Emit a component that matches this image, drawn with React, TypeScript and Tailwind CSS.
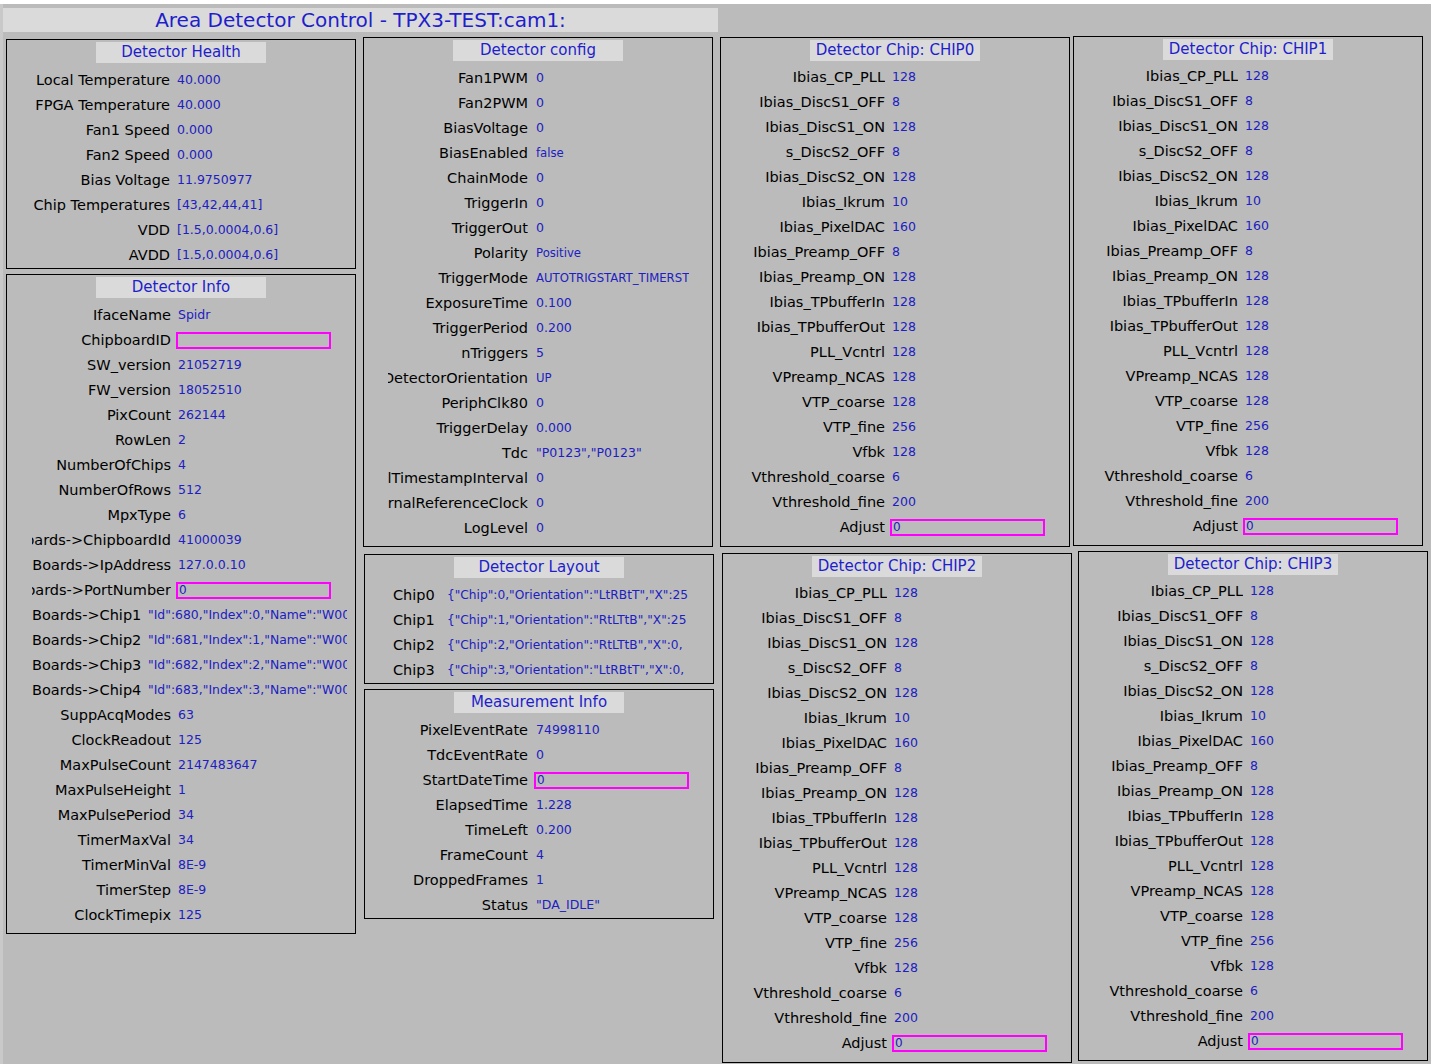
import type { ReactNode } from "react";

type RowDef = {
  label: string;
  value?: string;
  input?: boolean;
  small?: boolean;
};

const VALUE = "text-[#2020c2]";

function Panel({
  title,
  className,
  rowsTop = "mt-[5px]",
  children,
}: {
  title: string;
  className?: string;
  rowsTop?: string;
  children: ReactNode;
}) {
  return (
    <div className={`flex w-[350px] shrink-0 flex-col border border-black ${className}`}>
      <div className="ml-[89px] mt-[2px] h-[21px] w-[170px] bg-[#dadada] text-center text-[15px] leading-[21px] text-[#1e1ecc]">
        {title}
      </div>
      <div className={`flex flex-col ${rowsTop}`}>{children}</div>
    </div>
  );
}

function Row({
  row,
  ml = 24,
  gap = 7,
}: {
  row: RowDef;
  ml?: number;
  gap?: number;
}) {
  return (
    <div className="flex h-[25px] items-center">
      <div
        className={`flex shrink-0 justify-end overflow-hidden whitespace-nowrap text-[14.5px] text-black ${
          ml === 23 ? "ml-[23px] w-[140px]" : ml === 25 ? "ml-[25px] w-[139px]" : "ml-[24px] w-[140px]"
        }`}
      >
        <span className="shrink-0">{row.label}</span>
      </div>
      {row.input ? (
        <div
          className={`h-[17px] w-[155px] shrink-0 border-2 border-[#ff00ff] pl-[1px] text-[12px] leading-[13px] ${VALUE} ${
            gap === 8 ? "ml-[6px]" : "ml-[5px]"
          }`}
        >
          {row.value}
        </div>
      ) : (
        <div
          className={`w-[153px] shrink-0 overflow-hidden whitespace-nowrap ${VALUE} ${
            row.small ? "text-[11.7px]" : "text-[12.5px]"
          } ${gap === 8 ? "ml-[8px]" : "ml-[7px]"}`}
        >
          {row.value}
        </div>
      )}
    </div>
  );
}

const health: RowDef[] = [
  { label: "Local Temperature", value: "40.000" },
  { label: "FPGA Temperature", value: "40.000" },
  { label: "Fan1 Speed", value: "0.000" },
  { label: "Fan2 Speed", value: "0.000" },
  { label: "Bias Voltage", value: "11.9750977" },
  { label: "Chip Temperatures", value: "[43,42,44,41]" },
  { label: "VDD", value: "[1.5,0.0004,0.6]" },
  { label: "AVDD", value: "[1.5,0.0004,0.6]" },
];

const infoTop: RowDef[] = [
  { label: "IfaceName", value: "Spidr" },
  { label: "ChipboardID", value: "", input: true },
  { label: "SW_version", value: "21052719" },
  { label: "FW_version", value: "18052510" },
  { label: "PixCount", value: "262144" },
  { label: "RowLen", value: "2" },
  { label: "NumberOfChips", value: "4" },
  { label: "NumberOfRows", value: "512" },
  { label: "MpxType", value: "6" },
  { label: "Boards->ChipboardId", value: "41000039" },
  { label: "Boards->IpAddress", value: "127.0.0.10" },
  { label: "Boards->PortNumber", value: "0", input: true },
];

const boardChips = [
  { label: "Boards->Chip1", value: '"Id":680,"Index":0,"Name":"W0005_E02","IP":"192.168.1.10"' },
  { label: "Boards->Chip2", value: '"Id":681,"Index":1,"Name":"W0005_F02","IP":"192.168.1.10"' },
  { label: "Boards->Chip3", value: '"Id":682,"Index":2,"Name":"W0005_G02","IP":"192.168.1.10"' },
  { label: "Boards->Chip4", value: '"Id":683,"Index":3,"Name":"W0005_H02","IP":"192.168.1.10"' },
];

const infoBottom: RowDef[] = [
  { label: "SuppAcqModes", value: "63" },
  { label: "ClockReadout", value: "125" },
  { label: "MaxPulseCount", value: "2147483647" },
  { label: "MaxPulseHeight", value: "1" },
  { label: "MaxPulsePeriod", value: "34" },
  { label: "TimerMaxVal", value: "34" },
  { label: "TimerMinVal", value: "8E-9" },
  { label: "TimerStep", value: "8E-9" },
  { label: "ClockTimepix", value: "125" },
];

const config: RowDef[] = [
  { label: "Fan1PWM", value: "0" },
  { label: "Fan2PWM", value: "0" },
  { label: "BiasVoltage", value: "0" },
  { label: "BiasEnabled", value: "false", small: true },
  { label: "ChainMode", value: "0" },
  { label: "TriggerIn", value: "0" },
  { label: "TriggerOut", value: "0" },
  { label: "Polarity", value: "Positive", small: true },
  { label: "TriggerMode", value: "AUTOTRIGSTART_TIMERST", small: true },
  { label: "ExposureTime", value: "0.100" },
  { label: "TriggerPeriod", value: "0.200" },
  { label: "nTriggers", value: "5" },
  { label: "DetectorOrientation", value: "UP", small: true },
  { label: "PeriphClk80", value: "0" },
  { label: "TriggerDelay", value: "0.000" },
  { label: "Tdc", value: '"P0123","P0123"' },
  { label: "GlobalTimestampInterval", value: "0" },
  { label: "ExternalReferenceClock", value: "0" },
  { label: "LogLevel", value: "0" },
];

const layout = [
  { label: "Chip0", value: '{"Chip":0,"Orientation":"LtRBtT","X":25' },
  { label: "Chip1", value: '{"Chip":1,"Orientation":"RtLTtB","X":25' },
  { label: "Chip2", value: '{"Chip":2,"Orientation":"RtLTtB","X":0,' },
  { label: "Chip3", value: '{"Chip":3,"Orientation":"LtRBtT","X":0,' },
];

const measurement: RowDef[] = [
  { label: "PixelEventRate", value: "74998110" },
  { label: "TdcEventRate", value: "0" },
  { label: "StartDateTime", value: "0", input: true },
  { label: "ElapsedTime", value: "1.228" },
  { label: "TimeLeft", value: "0.200" },
  { label: "FrameCount", value: "4" },
  { label: "DroppedFrames", value: "1" },
  { label: "Status", value: '"DA_IDLE"' },
];

const chipRows: RowDef[] = [
  { label: "Ibias_CP_PLL", value: "128" },
  { label: "Ibias_DiscS1_OFF", value: "8" },
  { label: "Ibias_DiscS1_ON", value: "128" },
  { label: "s_DiscS2_OFF", value: "8" },
  { label: "Ibias_DiscS2_ON", value: "128" },
  { label: "Ibias_Ikrum", value: "10" },
  { label: "Ibias_PixelDAC", value: "160" },
  { label: "Ibias_Preamp_OFF", value: "8" },
  { label: "Ibias_Preamp_ON", value: "128" },
  { label: "Ibias_TPbufferIn", value: "128" },
  { label: "Ibias_TPbufferOut", value: "128" },
  { label: "PLL_Vcntrl", value: "128" },
  { label: "VPreamp_NCAS", value: "128" },
  { label: "VTP_coarse", value: "128" },
  { label: "VTP_fine", value: "256" },
  { label: "Vfbk", value: "128" },
  { label: "Vthreshold_coarse", value: "6" },
  { label: "Vthreshold_fine", value: "200" },
  { label: "Adjust", value: "0", input: true },
];

function ChipPanel({ n, className }: { n: number; className: string }) {
  return (
    <Panel title={`Detector Chip: CHIP${n}`} className={`h-[510px] ${className}`} rowsTop="mt-[4px]">
      {chipRows.map((r) => (
        <Row key={r.label} row={r} />
      ))}
    </Panel>
  );
}

export default function App() {
  return (
    <div className="min-h-screen w-full bg-[#bbbbbb] font-['DejaVu_Sans',sans-serif]">
      <div className="h-[4px] bg-white" />
      <div className="flex min-h-[1060px] items-start">
        <div className="w-[3px] shrink-0 self-stretch bg-[#c9c9c9]" />

        {/* left block: title + two columns */}
        <div className="flex w-[715px] shrink-0 flex-col">
          <div className="mt-[4px] h-[24px] w-[715px] bg-[#dadada] text-center text-[20px] leading-[24px] text-[#1e1ecc]">
            Area Detector Control - TPX3-TEST:cam1:
          </div>
          <div className="flex items-start">
            <div className="ml-[3px] flex flex-col">
              <Panel title="Detector Health" className="mt-[7px] h-[230px]">
                {health.map((r) => (
                  <Row key={r.label} row={r} ml={23} />
                ))}
              </Panel>
              <Panel title="Detector Info" className="mt-[5px] h-[660px]">
                {infoTop.map((r) => (
                  <Row key={r.label} row={r} ml={25} />
                ))}
                {boardChips.map((r) => (
                  <div key={r.label} className="flex h-[25px] items-center">
                    <div className="ml-[25px] w-[112px] shrink-0 whitespace-nowrap text-[14.5px] text-black">
                      {r.label}
                    </div>
                    <div className={`ml-[4px] w-[199px] shrink-0 overflow-hidden whitespace-nowrap text-[12.4px] ${VALUE}`}>
                      {r.value}
                    </div>
                  </div>
                ))}
                {infoBottom.map((r) => (
                  <Row key={r.label} row={r} ml={25} />
                ))}
              </Panel>
            </div>

            <div className="ml-[7px] flex w-[351px] flex-col">
              <Panel title="Detector config" className="mt-[5px] h-[510px]">
                {config.map((r) => (
                  <Row key={r.label} row={r} gap={8} />
                ))}
              </Panel>
              <Panel title="Detector Layout" className="ml-[1px] mt-[7px] h-[130px]">
                {layout.map((r) => (
                  <div key={r.label} className="flex h-[25px] items-center">
                    <div className="ml-[28px] w-[54px] shrink-0 text-[14.5px] text-black">{r.label}</div>
                    <div className={`w-[242px] shrink-0 overflow-hidden whitespace-nowrap text-[12.2px] ${VALUE}`}>
                      {r.value}
                    </div>
                  </div>
                ))}
              </Panel>
              <Panel title="Measurement Info" className="ml-[1px] mt-[5px] h-[230px]">
                {measurement.map((r) => (
                  <Row key={r.label} row={r} ml={23} gap={8} />
                ))}
              </Panel>
            </div>
          </div>
        </div>

        {/* chip columns */}
        <div className="ml-[2px] flex w-[352px] shrink-0 flex-col">
          <ChipPanel n={0} className="mt-[33px]" />
          <ChipPanel n={2} className="ml-[2px] mt-[6px]" />
        </div>
        <div className="ml-[1px] flex shrink-0 flex-col">
          <ChipPanel n={1} className="mt-[32px]" />
          <ChipPanel n={3} className="ml-[5px] mt-[5px]" />
        </div>
      </div>
    </div>
  );
}
